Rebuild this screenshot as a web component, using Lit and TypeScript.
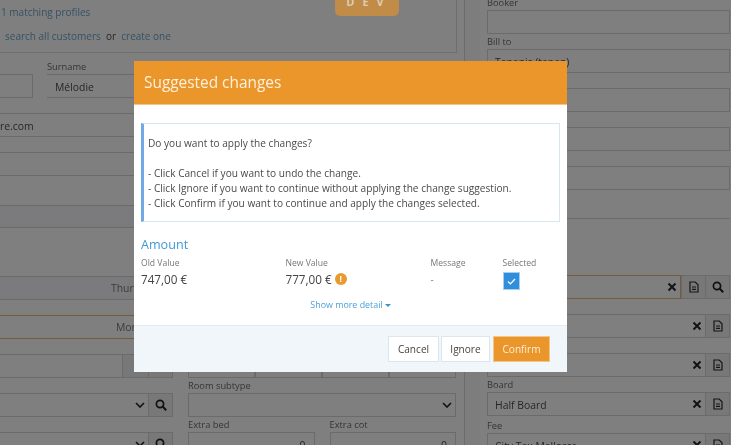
import { LitElement, html, css, svg } from "lit";
import { customElement } from "lit/decorators.js";

const xIcon = svg`<svg class="ic" viewBox="0 0 10 10" width="10" height="10"><path d="M1.5 1.5l7 7M8.5 1.5l-7 7" stroke="#222" stroke-width="1.9" fill="none"/></svg>`;
const docIcon = svg`<svg class="ic" viewBox="0 0 10 12" width="10" height="12"><path d="M1 1h5.2L9 3.8V11H1z M3 6h4M3 8.3h4" stroke="#2a2a2a" stroke-width="1.2" fill="none"/></svg>`;
const searchIcon = svg`<svg class="ic" viewBox="0 0 12 12" width="12" height="12"><circle cx="5" cy="5" r="3.6" stroke="#222" stroke-width="1.7" fill="none"/><path d="M7.8 7.8l3.4 3.4" stroke="#222" stroke-width="2" fill="none"/></svg>`;
const chev = svg`<svg class="ic" viewBox="0 0 10 6" width="10" height="6"><path d="M1 1l4 4 4-4" stroke="#222" stroke-width="1.6" fill="none"/></svg>`;

@customElement("app-root")
export class AppRoot extends LitElement {
  static styles = css`
    :host { display: block; width: 731px; height: 445px; position: relative; overflow: hidden; background: #fff; font-family: "Open Sans", "Liberation Sans", sans-serif; color: #4c4c4c; font-size: 10.4px; }
    .page { display: flex; height: 445px; filter: blur(0.4px); }
    .left { width: 456px; flex: none; }
    .top { height: 52px; border-right: 1px solid #dcdcdc; border-bottom: 1px solid #dcdcdc; padding-left: 1px; margin-right: -1px; font-size: 10px; }
    .top p { margin: 0; height: 24px; line-height: 24px; white-space: nowrap; }
    .top p.two { padding-left: 4px; }
    .top a { color: #6fa3c8; }
    .cols { display: flex; gap: 15px; }
    .col { width: 173px; flex: none; }
    .mid { width: 268px; flex: none; }
    .scroll { width: 15px; flex: none; margin-left: 8px; border-left: 1px solid #d8d8d8; background: #fbfbfb; }
    .right { width: 243px; flex: none; margin-left: 7px; }
    .lab { height: 14px; line-height: 14px; margin-top: 1px; font-size: 9.3px; color: #6a6a6a; }
    .lab.first { margin-top: -4px; }
    .lab.wide { margin-top: 7px; }
    .f { height: 24px; box-sizing: border-box; border: 1px solid #d6d6d6; display: flex; align-items: center; white-space: nowrap; overflow: hidden; background: #fff; }
    .col .f { border-left: none; }
    .gap { margin-top: 15px; }
    .txt { flex: 1; padding: 1px 0 0 7px; overflow: hidden; }
    .flush .txt { padding-left: 0; }
    .sur .txt { padding-left: 8px; }
    .ic { flex: none; }
    .x { margin-right: 3px; display: flex; }
    .box { width: 23px; align-self: stretch; flex: none; display: flex; align-items: center; justify-content: center; background: #f1f1f1; border-left: 1px solid #d6d6d6; }
    .blue { background: #f6f7fb; }
    .short { height: 23px; }
    .orange { border-color: #ecb775; }
    .split { border: none; }
    .inner { flex: 1; align-self: stretch; display: flex; align-items: center; border: 1px solid #ecb775; border-left-color: #d6d6d6; }
    .tail { align-self: stretch; display: flex; border: 1px solid #d6d6d6; border-left: none; }
    .num { text-align: right; padding: 1px 8px 0 0; flex: 1; }
    .thu { padding-left: 111px; color: #777; }
    .mon { padding-left: 116px; color: #777; }
    .narrow { width: 33px; }
    .sur { margin-left: 14px; flex: 1; }
    .surrow { display: flex; }
    .four { display: flex; margin-top: 301px; }
    .four .f { flex: 1; }
    .pair { display: flex; gap: 15px; }
    .pair > div { flex: 1; }
    .spacer { height: 29px; }
    .spacer2 { height: 48px; }
    .rule { border-top: 1px solid #d6d6d6; height: 56px; margin-top: 28px; }
    .fee { margin-top: 3px; }
    .dev { position: absolute; left: 335px; top: 0; width: 64px; height: 16px; background: #c08c47; border-radius: 0 0 5px 5px; color: #dccbb4; font-weight: 700; font-size: 11px; letter-spacing: 8px; padding-left: 4px; box-sizing: border-box; text-align: center; line-height: 4px; overflow: hidden; }
    .overlay { position: absolute; inset: 0; background: rgba(0,0,0,.5); }
    .modal { position: absolute; left: 134px; top: 61px; width: 433px; height: 311px; background: #fff; display: flex; flex-direction: column; color: #444; filter: blur(0.3px); }
    .head { height: 43px; background: #eb962b; color: #fdf0dc; font-size: 15.4px; line-height: 43px; padding-left: 10px; border-bottom: 1px solid #f3c58c; flex: none; }
    .body { flex: 1; padding: 18px 7px 0; }
    .info { box-sizing: border-box; height: 99px; border: 1px solid #d8e6ee; border-left: 3px solid #72a9e2; padding: 12px 0 0 4px; font-size: 10.12px; line-height: 15px; color: #4a4a4a; white-space: pre-line; }
    .amount { color: #3f9ad8; font-size: 12.6px; line-height: 18px; margin-top: 14px; }
    .grid { display: grid; grid-template-columns: 144.5px 145px 72px 1fr; }
    .gl { font-size: 8.6px; color: #777; line-height: 12px; margin-top: 3px; }
    .gv { font-size: 11.7px; color: #444; line-height: 18px; display: flex; align-items: center; gap: 3px; height: 18px; margin-top: 1px; }
    .msg { font-size: 10px; color: #888; }
    .warn { width: 12px; height: 12px; border-radius: 50%; background: #e99a2f; color: #fff; font-size: 8.5px; font-weight: 700; line-height: 12px; text-align: center; }
    .check { width: 17px; height: 18px; margin-top: 3px; background: #2f8fdc; border: 1px solid #a9cdec; box-sizing: border-box; display: flex; align-items: center; justify-content: center; }
    .more { text-align: center; color: #4da0d8; font-size: 8.9px; line-height: 12px; margin-top: 9px; }
    .caret { display: inline-block; width: 0; height: 0; border-left: 3px solid transparent; border-right: 3px solid transparent; border-top: 3.5px solid #3f8fc8; margin-left: 2px; vertical-align: 1px; }
    .foot { height: 47px; box-sizing: border-box; background: #f1f6fb; border-top: 1px solid #e4ebf1; flex: none; display: flex; justify-content: flex-end; align-items: flex-start; gap: 2px; padding: 10px 17px 0 0; }
    .btn { height: 26px; box-sizing: border-box; border: 1px solid #dce6ec; background: #fff; color: #444; font: 10.1px/24px "Open Sans", sans-serif; padding: 0; text-align: center; }
    .b1 { width: 51px; }
    .b2 { width: 49px; }
    .b3 { width: 57px; background: #eb962b; color: #fdeed8; border-color: #f4c58a; margin-left: 1px; }
  `;

  private field(extra = "", text = "", right: unknown = null) {
    return html`<div class="f ${extra}"><span class="txt">${text}</span>${right}</div>`;
  }

  render() {
    const xd = html`<span class="x">${xIcon}</span><span class="box">${docIcon}</span>`;
    const chs = html`<span class="x">${chev}</span><span class="box">${searchIcon}</span>`;
    return html`
      <div class="page">
        <div class="left">
          <div class="top">
            <p><a>1 matching profiles</a></p>
            <p class="two"><a>search all customers</a>&nbsp; or &nbsp;<a>create one</a></p>
          </div>
          <div class="cols">
            <div class="col">
              <div class="surrow">
                <div class="narrow"><div class="lab wide">&nbsp;</div>${this.field()}</div>
                <div class="sur"><div class="lab wide">Surname</div>${this.field("", "Mélodie")}</div>
              </div>
              ${this.field("gap flush", "re.com")}
              ${this.field("gap")}
              <div class="spacer"></div>
              ${this.field("blue short")}
              <div class="spacer2"></div>
              <div class="f blue"><span class="thu">Thursday</span></div>
              <div class="f gap orange"><span class="mon">Monday</span></div>
              <div class="f gap">
                <span class="txt"></span>
                <span class="box" style="width:25px"></span>
                <span class="box"></span>
              </div>
              ${this.field("gap", "", chs)}
              ${this.field("gap", "", chs)}
            </div>
            <div class="mid">
              <div class="four">${this.field()}${this.field()}${this.field()}${this.field()}</div>
              <div class="lab">Room subtype</div>
              ${this.field("", "", html`<span class="x">${chev}</span>`)}
              <div class="pair">
                <div><div class="lab">Extra bed</div><div class="f"><span class="num">0</span></div></div>
                <div><div class="lab">Extra cot</div><div class="f"><span class="num">0</span></div></div>
              </div>
            </div>
          </div>
        </div>
        <div class="scroll"></div>
        <div class="right">
          <div class="lab first">Booker</div>
          ${this.field()}
          <div class="lab">Bill to</div>
          ${this.field("", "Tapanis (tapan)")}
          ${this.field("gap")}
          ${this.field("gap", "")}
          ${this.field("gap")}
          <div class="rule"></div>
          <div class="f split">
            <div class="inner"><span class="txt"></span><span class="x">${xIcon}</span></div>
            <div class="tail"><span class="box">${docIcon}</span><span class="box">${searchIcon}</span></div>
          </div>
          ${this.field("gap", "", xd)}
          ${this.field("gap", "", xd)}
          <div class="lab">Board</div>
          ${this.field("", "Half Board", xd)}
          <div class="lab fee">Fee</div>
          ${this.field("", "City Tax Mallorca", xd)}
        </div>
      </div>
      <div class="overlay"></div>
      <div class="dev">DEV</div>
      <div class="modal">
        <div class="head">Suggested changes</div>
        <div class="body">
          <div class="info">Do you want to apply the changes?

- Click Cancel if you want to undo the change.
- Click Ignore if you want to continue without applying the change suggestion.
- Click Confirm if you want to continue and apply the changes selected.</div>
          <div class="amount">Amount</div>
          <div class="grid">
            <div><div class="gl">Old Value</div><div class="gv">747,00 €</div></div>
            <div><div class="gl">New Value</div><div class="gv"><span>777,00 €</span><span class="warn">!</span></div></div>
            <div><div class="gl">Message</div><div class="gv msg">-</div></div>
            <div><div class="gl">Selected</div>
              <div class="check"><svg viewBox="0 0 10 8" width="9" height="7"><path d="M1 4l2.7 2.7L9 1.2" stroke="#fff" stroke-width="1.5" fill="none"/></svg></div>
            </div>
          </div>
          <div class="more">Show more detail<span class="caret"></span></div>
        </div>
        <div class="foot">
          <button class="btn b1">Cancel</button>
          <button class="btn b2">Ignore</button>
          <button class="btn b3">Confirm</button>
        </div>
      </div>
    `;
  }
}
